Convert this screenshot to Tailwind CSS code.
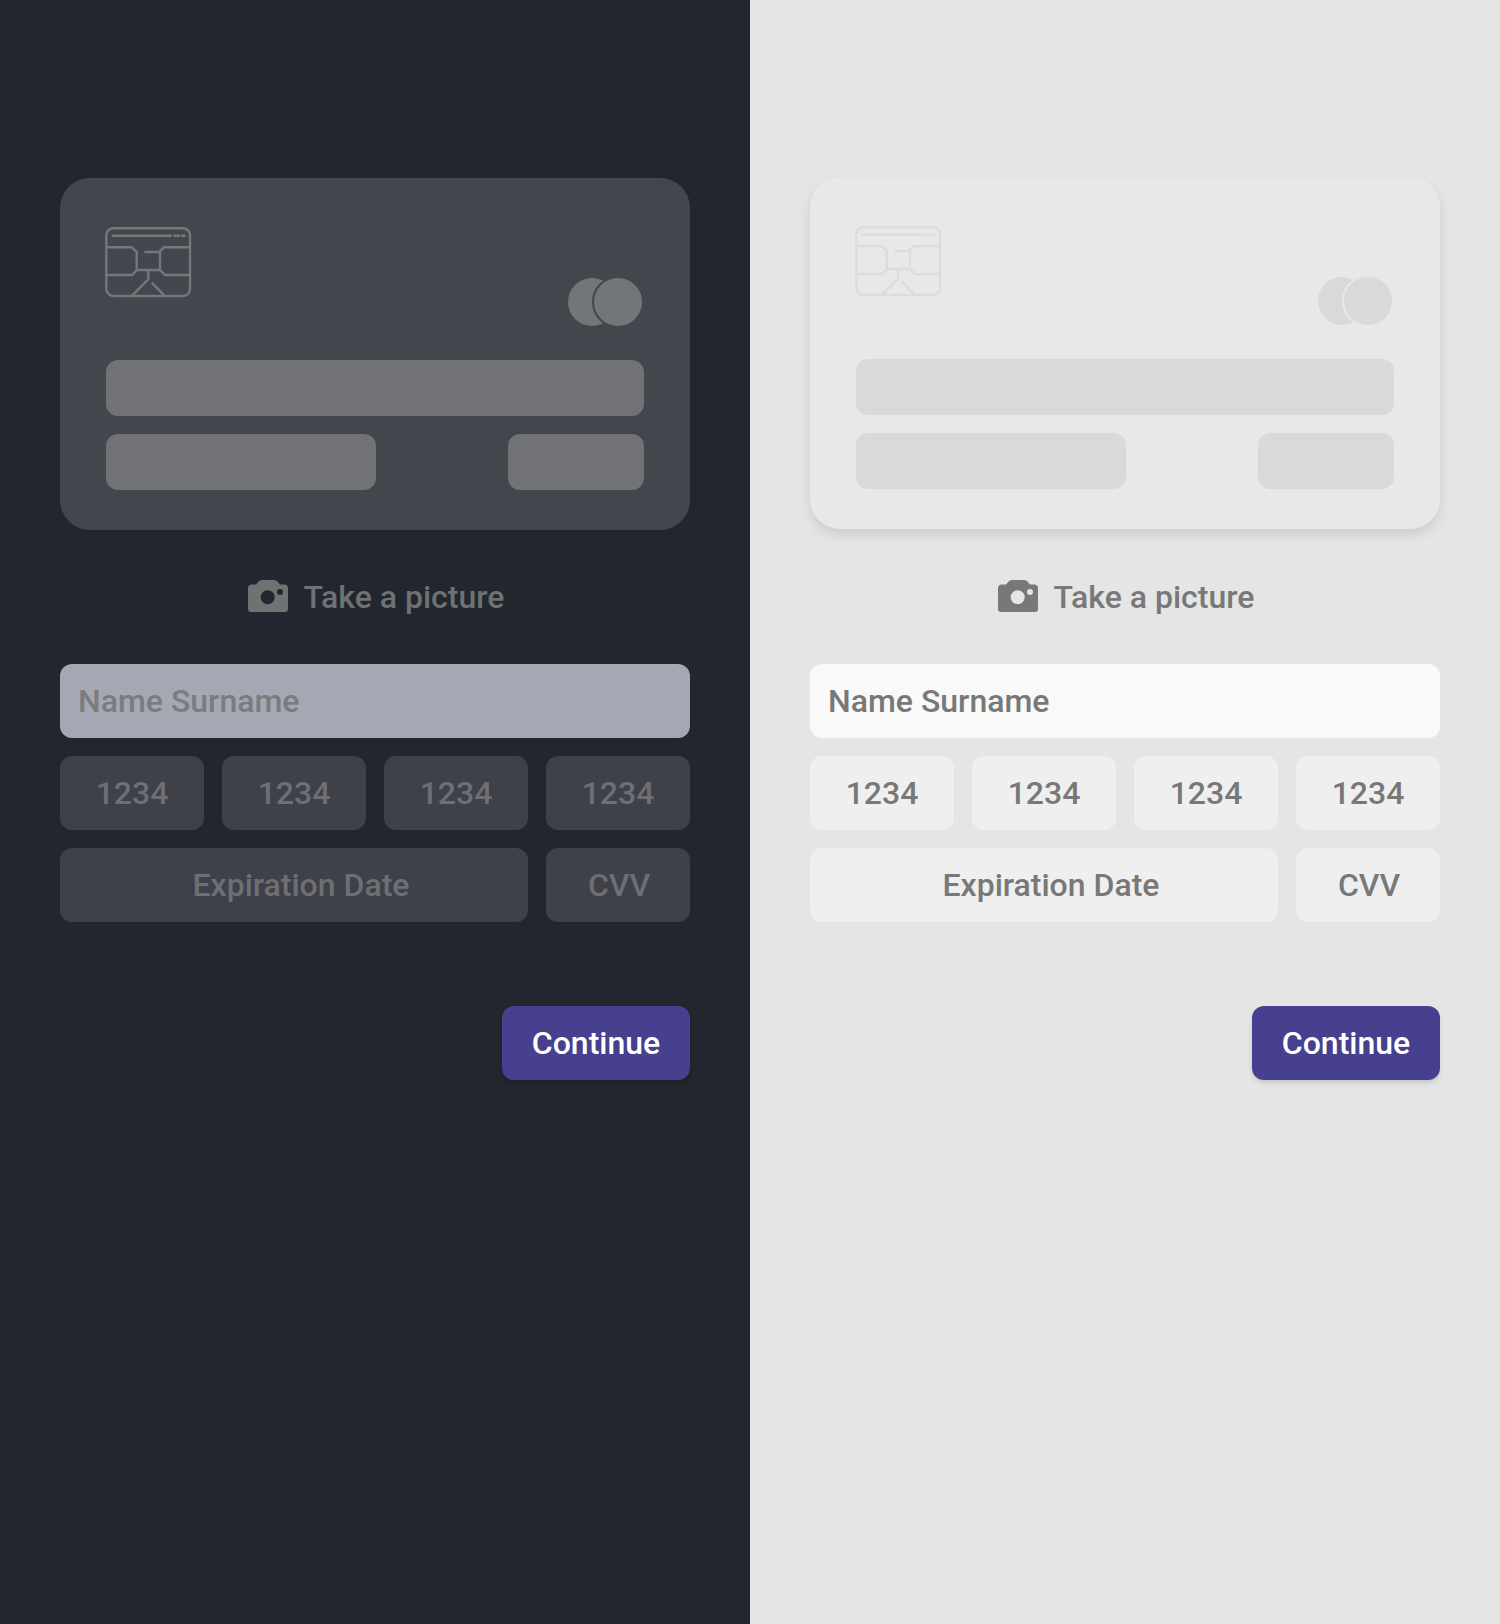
<!DOCTYPE html>
<html lang="en">
<head>
    <meta charset="UTF-8">
    <meta name="viewport" content="width=device-width, initial-scale=1.0">
    <title>Add card</title>
    <script src="https://cdn.jsdelivr.net/npm/@tailwindcss/browser@4"></script>
</head>
<body class="font-['Roboto',sans-serif] font-medium antialiased">
    <div class="grid grid-cols-2 h-[1624px] overflow-hidden">
        <!-- Dark theme -->
        <section class="bg-[#22262e] px-[60px] pt-[178px]">
            <div class="h-[352px] rounded-[30px] bg-[#43464d] pt-[48px] px-[46px]">
                <div class="flex justify-between h-[133px]">
                    <svg class="w-[88px] h-[72px] -ml-[2px] text-[#75777b]" viewBox="0 0 88 72" fill="none" stroke="currentColor" stroke-width="2.4">
                        <rect x="2.3" y="2.3" width="83.7" height="67.7" rx="7"/>
                        <path d="M7.7 9.7H67.7M69.3 9.7H76M77 9.7H81.7"/>
                        <path d="M2 21.3H27.7L32.7 25.7V44L28.3 49H2"/>
                        <path d="M86 21.3H60L56 25V44L61 49H86"/>
                        <path d="M40.3 26H56M32.7 44H56M44.3 44V53.3L28.3 69.3M47.7 56.7L60.3 69.3"/>
                    </svg>
                    <div class="relative w-[74px] h-[48px] mt-[52px] mr-[2px]">
                        <div class="absolute left-0 top-0 w-[48px] h-[48px] rounded-full bg-[#727678]"></div>
                        <div class="absolute left-[23.5px] -top-[2px] w-[52px] h-[52px] rounded-full bg-[#727678] border-2 border-[#43464d]"></div>
                    </div>
                </div>
                <div class="h-[56px] rounded-[12px] bg-[#717275] mt-[1px]"></div>
                <div class="flex justify-between mt-[18px]">
                    <div class="w-[270px] h-[56px] rounded-[12px] bg-[#717275]"></div>
                    <div class="w-[136px] h-[56px] rounded-[12px] bg-[#717275]"></div>
                </div>
            </div>
            <div class="flex items-center justify-center gap-[16px] h-[134px] pl-[2px] text-[#707173] text-[32px]">
                <svg class="w-[40px] h-[32px] -mt-[2px]" viewBox="0 0 40 32" fill="currentColor" fill-rule="evenodd">
                    <path d="M4 4.5H8L10.5 1.5Q11.7 0 14 0H26Q28.3 0 29.5 1.5L32 4.5H36Q40 4.5 40 8V29Q40 32 37 32H3Q0 32 0 29V8Q0 4.5 4 4.5ZM19.7 10.3A7 7 0 1 0 19.7 24.3A7 7 0 1 0 19.7 10.3ZM32 9A3 3 0 1 0 32 15A3 3 0 1 0 32 9Z"/>
                </svg>
                <span>Take a picture</span>
            </div>
            <div class="flex items-center h-[74px] rounded-[12px] bg-[#a4a8b3] px-[18px] text-[32px] text-[#7b7c80]">Name Surname</div>
            <div class="grid grid-cols-4 gap-[18px] mt-[18px] text-[32px] text-[#6e6f72]">
                <div class="flex items-center justify-center h-[74px] rounded-[12px] bg-[#3e414a]">1234</div>
                <div class="flex items-center justify-center h-[74px] rounded-[12px] bg-[#3e414a]">1234</div>
                <div class="flex items-center justify-center h-[74px] rounded-[12px] bg-[#3e414a]">1234</div>
                <div class="flex items-center justify-center h-[74px] rounded-[12px] bg-[#3e414a]">1234</div>
                <div class="col-span-3 flex items-center justify-center h-[74px] pl-[14px] rounded-[12px] bg-[#3e414a]">Expiration Date</div>
                <div class="flex items-center justify-center h-[74px] pl-[2px] rounded-[12px] bg-[#3e414a]">CVV</div>
            </div>
            <div class="flex justify-end mt-[84px]">
                <button class="w-[188px] h-[74px] rounded-[12px] bg-[#46408e] text-white text-[32px] shadow-md">Continue</button>
            </div>
        </section>

        <!-- Light theme -->
        <section class="bg-[#e5e5e5] px-[60px] pt-[177px]">
            <div class="h-[352px] rounded-[30px] bg-[#e8e8e8] pt-[48px] px-[46px] shadow-[0_6px_12px_rgba(0,0,0,0.1)]">
                <div class="flex justify-between h-[133px]">
                    <svg class="w-[88px] h-[72px] -ml-[2px] text-[#dcdcdc]" viewBox="0 0 88 72" fill="none" stroke="currentColor" stroke-width="2.4">
                        <rect x="2.3" y="2.3" width="83.7" height="67.7" rx="7"/>
                        <path d="M7.7 9.7H67.7M69.3 9.7H76M77 9.7H81.7"/>
                        <path d="M2 21.3H27.7L32.7 25.7V44L28.3 49H2"/>
                        <path d="M86 21.3H60L56 25V44L61 49H86"/>
                        <path d="M40.3 26H56M32.7 44H56M44.3 44V53.3L28.3 69.3M47.7 56.7L60.3 69.3"/>
                    </svg>
                    <div class="relative w-[74px] h-[48px] mt-[52px] mr-[2px]">
                        <div class="absolute left-0 top-0 w-[48px] h-[48px] rounded-full bg-[#d9d9d9]"></div>
                        <div class="absolute left-[23.5px] -top-[2px] w-[52px] h-[52px] rounded-full bg-[#d9d9d9] border-2 border-[#e8e8e8]"></div>
                    </div>
                </div>
                <div class="h-[56px] rounded-[12px] bg-[#d9d9d9] mt-[1px]"></div>
                <div class="flex justify-between mt-[18px]">
                    <div class="w-[270px] h-[56px] rounded-[12px] bg-[#d9d9d9]"></div>
                    <div class="w-[136px] h-[56px] rounded-[12px] bg-[#d9d9d9]"></div>
                </div>
            </div>
            <div class="flex items-center justify-center gap-[16px] h-[135px] pl-[2px] text-[#787878] text-[32px]">
                <svg class="w-[40px] h-[32px] -mt-[2px]" viewBox="0 0 40 32" fill="currentColor" fill-rule="evenodd">
                    <path d="M4 4.5H8L10.5 1.5Q11.7 0 14 0H26Q28.3 0 29.5 1.5L32 4.5H36Q40 4.5 40 8V29Q40 32 37 32H3Q0 32 0 29V8Q0 4.5 4 4.5ZM19.7 10.3A7 7 0 1 0 19.7 24.3A7 7 0 1 0 19.7 10.3ZM32 9A3 3 0 1 0 32 15A3 3 0 1 0 32 9Z"/>
                </svg>
                <span>Take a picture</span>
            </div>
            <div class="flex items-center h-[74px] rounded-[12px] bg-[#f9f9f9] px-[18px] text-[32px] text-[#787878]">Name Surname</div>
            <div class="grid grid-cols-4 gap-[18px] mt-[18px] text-[32px] text-[#787878]">
                <div class="flex items-center justify-center h-[74px] rounded-[12px] bg-[#efefef]">1234</div>
                <div class="flex items-center justify-center h-[74px] rounded-[12px] bg-[#efefef]">1234</div>
                <div class="flex items-center justify-center h-[74px] rounded-[12px] bg-[#efefef]">1234</div>
                <div class="flex items-center justify-center h-[74px] rounded-[12px] bg-[#efefef]">1234</div>
                <div class="col-span-3 flex items-center justify-center h-[74px] pl-[14px] rounded-[12px] bg-[#efefef]">Expiration Date</div>
                <div class="flex items-center justify-center h-[74px] pl-[2px] rounded-[12px] bg-[#efefef]">CVV</div>
            </div>
            <div class="flex justify-end mt-[84px]">
                <button class="w-[188px] h-[74px] rounded-[12px] bg-[#46408e] text-white text-[32px] shadow-md">Continue</button>
            </div>
        </section>
    </div>
</body>
</html>
